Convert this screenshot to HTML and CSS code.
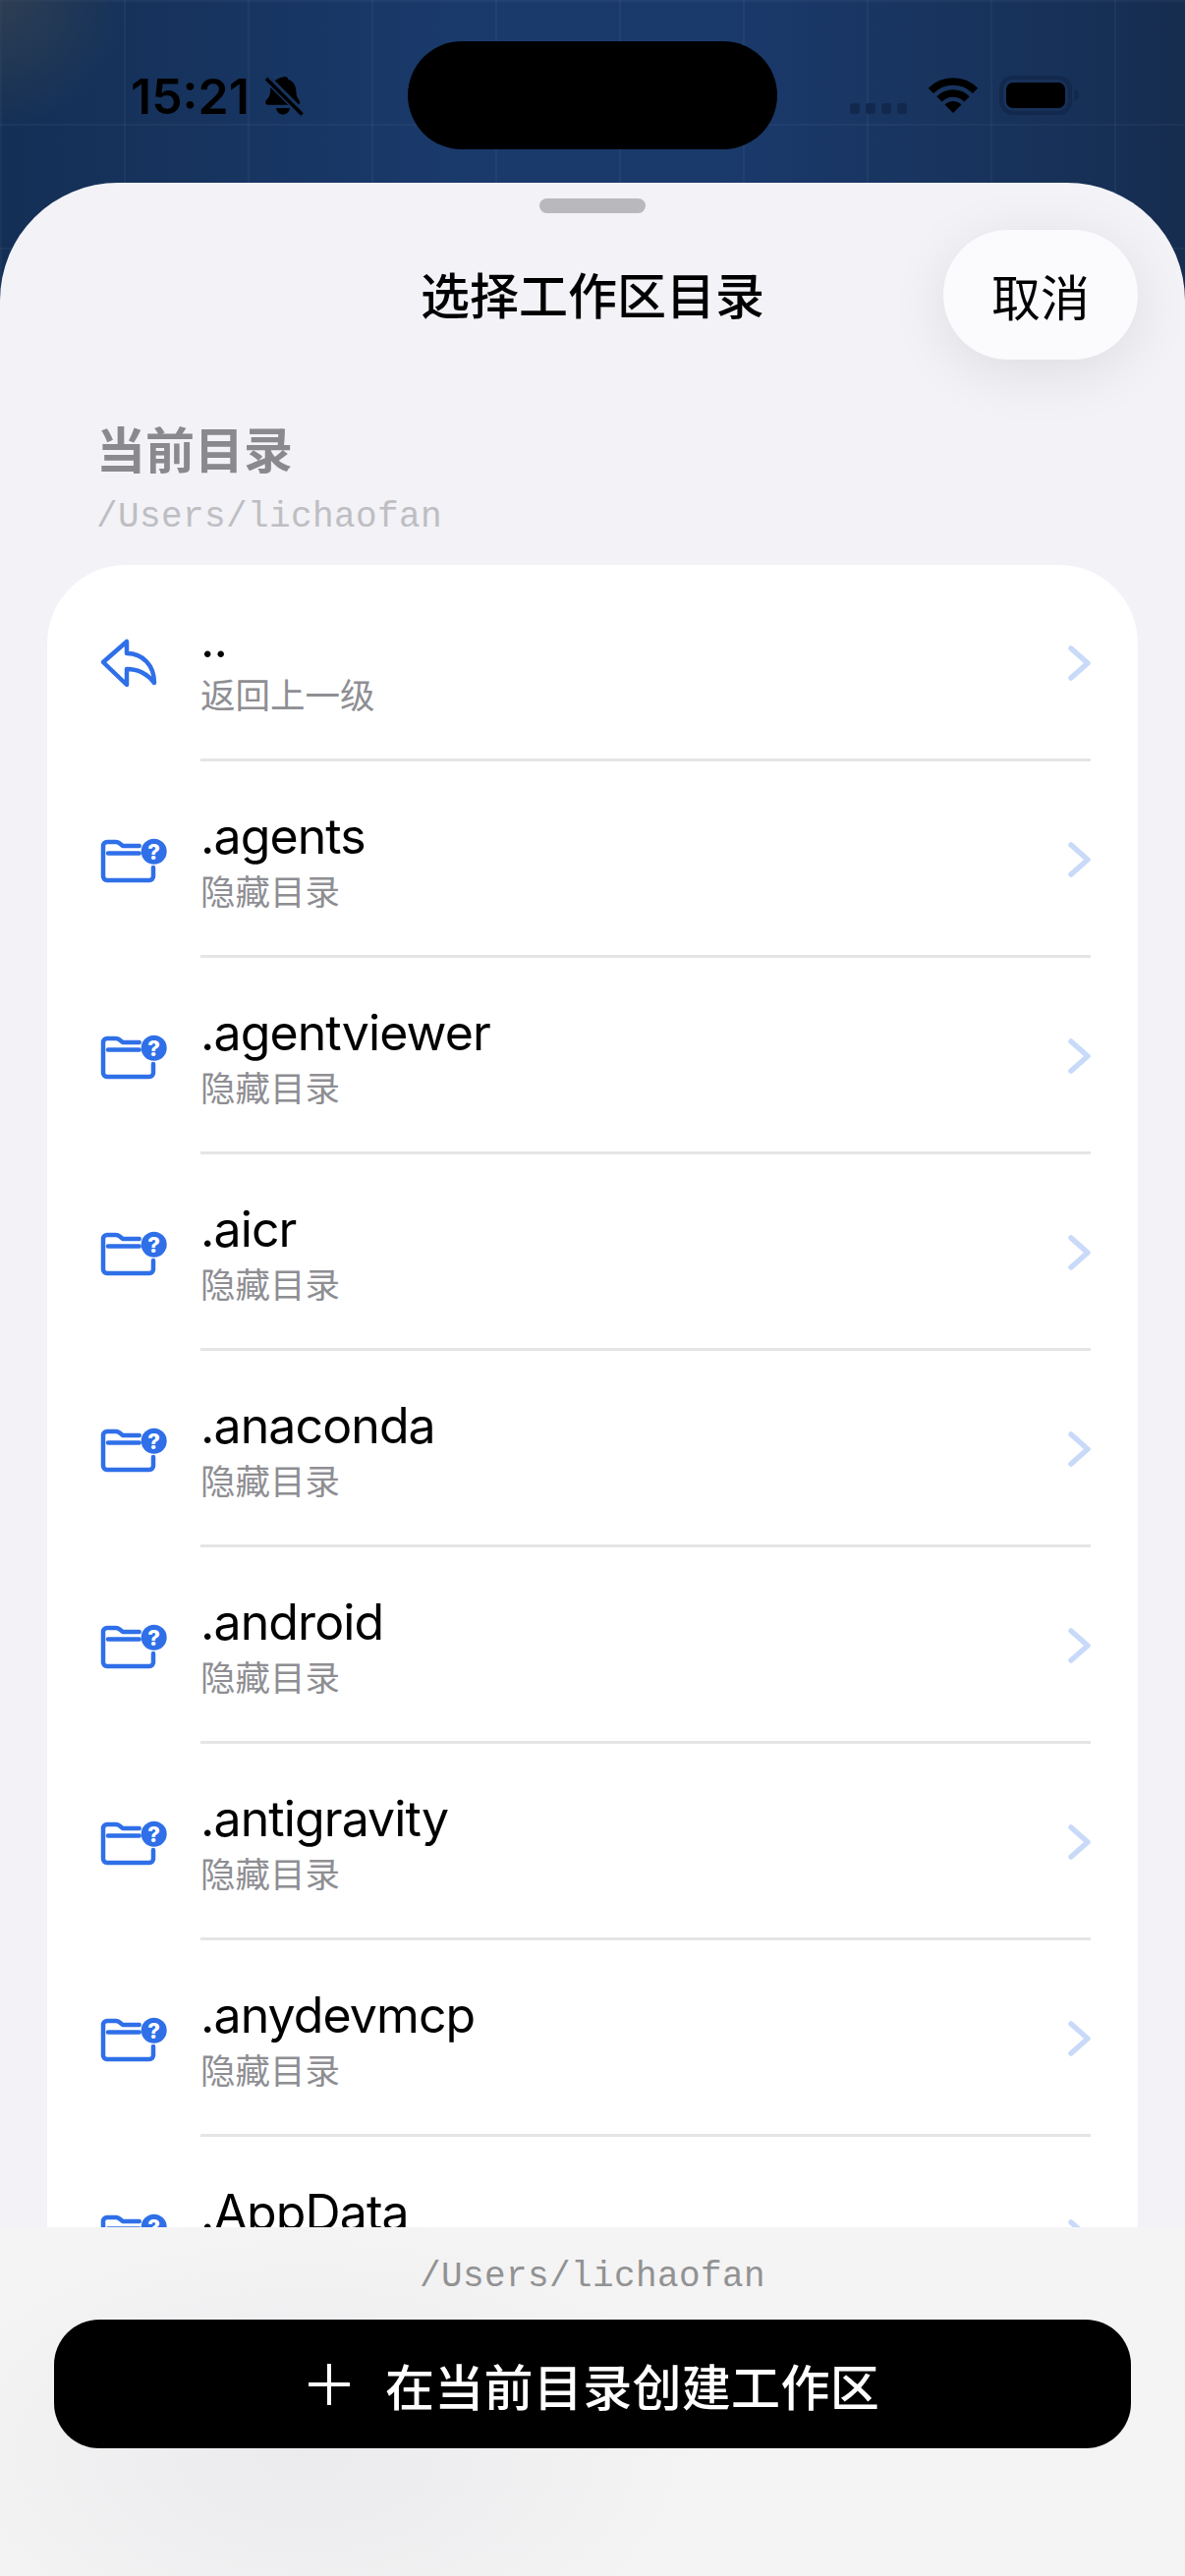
FILE: index.html
```html
<!DOCTYPE html>
<html lang="zh-CN">
  <head>
    <meta charset="UTF-8" />
    <meta name="viewport" content="width=device-width, initial-scale=1.0" />
    <title>选择工作区目录</title>
    <link rel="stylesheet" href="styles.css">
  </head>
  <body>
    <svg class="icon-defs" width="0" height="0">
      <symbol id="folder-hidden" viewBox="0 0 72 60">
        <path class="line" d="M56 38V47a4 4 0 0 1-4 4H9a4 4 0 0 1-4-4V16a4 4 0 0 1 4-4H18q2 0 3.500 1.300L25 16H41.700M10 23.500H41.700" />
        <circle class="badge" cx="56.700" cy="21.700" r="13" />
        <text class="badge-mark" x="56.700" y="29.500" text-anchor="middle">?</text>
      </symbol>
      <symbol id="chevron" viewBox="0 0 26 40">
        <path class="chevron-line" d="M6 5L23 20L6 35" />
      </symbol>
    </svg>

    <header class="status-bar">
      <div class="status-left">
        <span class="clock">15:21</span>
        <svg class="bell" width="40" height="42" viewBox="0 0 40 42">
          <path d="M18 2c1.500-1.500 4-1.500 5.500 0 .5.600.7 1.200.8 1.800 5 1.800 7.700 6 8 11.500.2 4 .6 7 3 9.500 1.400 1.500 1.200 5-1.500 5H4c-3 0-3.700-3-1.800-5 2.500-2.500 3.800-5 4-10 .3-6 3.500-10.200 8-11.500.5-.6 1.500-1.300 3.800-1.800z" />
          <path d="M12 33h14c-.5 4-3.500 6.500-7 6.500s-6.500-2.500-7-6.500z" />
          <path class="bell-gap" d="M0 0L40 40" />
          <path class="bell-slash" d="M2 3L38.500 39.500" />
        </svg>
      </div>
      <div class="island"></div>
      <div class="status-right">
        <div class="signal"><i></i><i></i><i></i><i></i></div>
        <svg class="wifi" width="50" height="38" viewBox="0 0 50 38">
          <path class="wifi-arc" d="M2.400 14.400A32 32 0 0 1 47.600 14.400" />
          <path class="wifi-arc" d="M10.900 22.900A20 20 0 0 1 39.100 22.900" />
          <path d="M25 37L16.500 28.500A12 12 0 0 1 33.500 28.500Z" />
        </svg>
        <svg class="battery" width="83" height="40" viewBox="0 0 83 40">
          <rect class="battery-case" x="2" y="2" width="70" height="36" rx="12" />
          <rect x="7" y="7" width="60" height="26" rx="7" />
          <path class="battery-tip" d="M76 14c3 .5 5 3 5 6s-2 5.500-5 6z" />
        </svg>
      </div>
    </header>

    <main class="sheet">
      <div class="grabber"></div>

      <div class="sheet-header">
        <h1 class="sheet-title">选择工作区目录</h1>
        <button class="cancel-btn">取消</button>
      </div>

      <div class="current-dir">
        <h2 class="current-label">当前目录</h2>
        <p class="current-path">/Users/lichaofan</p>
      </div>

      <div class="list-wrap">
        <ul class="dir-list">
          <li class="dir-row">
            <svg class="dir-icon" width="72" height="60" viewBox="0 0 72 60">
              <path class="line" d="M5 29L29 8V20C45 20 57 32 57 50C50 41 40 36 29 36V52Z" />
            </svg>
            <div class="dir-body">
              <div class="dir-text">
                <span class="dir-name">..</span>
                <span class="dir-sub">返回上一级</span>
              </div>
              <svg class="dir-chevron" width="26" height="40"><use href="#chevron" /></svg>
            </div>
          </li>
          <li class="dir-row">
            <svg class="dir-icon" width="72" height="60"><use href="#folder-hidden" /></svg>
            <div class="dir-body">
              <div class="dir-text">
                <span class="dir-name">.agents</span>
                <span class="dir-sub">隐藏目录</span>
              </div>
              <svg class="dir-chevron" width="26" height="40"><use href="#chevron" /></svg>
            </div>
          </li>
          <li class="dir-row">
            <svg class="dir-icon" width="72" height="60"><use href="#folder-hidden" /></svg>
            <div class="dir-body">
              <div class="dir-text">
                <span class="dir-name">.agentviewer</span>
                <span class="dir-sub">隐藏目录</span>
              </div>
              <svg class="dir-chevron" width="26" height="40"><use href="#chevron" /></svg>
            </div>
          </li>
          <li class="dir-row">
            <svg class="dir-icon" width="72" height="60"><use href="#folder-hidden" /></svg>
            <div class="dir-body">
              <div class="dir-text">
                <span class="dir-name">.aicr</span>
                <span class="dir-sub">隐藏目录</span>
              </div>
              <svg class="dir-chevron" width="26" height="40"><use href="#chevron" /></svg>
            </div>
          </li>
          <li class="dir-row">
            <svg class="dir-icon" width="72" height="60"><use href="#folder-hidden" /></svg>
            <div class="dir-body">
              <div class="dir-text">
                <span class="dir-name">.anaconda</span>
                <span class="dir-sub">隐藏目录</span>
              </div>
              <svg class="dir-chevron" width="26" height="40"><use href="#chevron" /></svg>
            </div>
          </li>
          <li class="dir-row">
            <svg class="dir-icon" width="72" height="60"><use href="#folder-hidden" /></svg>
            <div class="dir-body">
              <div class="dir-text">
                <span class="dir-name">.android</span>
                <span class="dir-sub">隐藏目录</span>
              </div>
              <svg class="dir-chevron" width="26" height="40"><use href="#chevron" /></svg>
            </div>
          </li>
          <li class="dir-row">
            <svg class="dir-icon" width="72" height="60"><use href="#folder-hidden" /></svg>
            <div class="dir-body">
              <div class="dir-text">
                <span class="dir-name">.antigravity</span>
                <span class="dir-sub">隐藏目录</span>
              </div>
              <svg class="dir-chevron" width="26" height="40"><use href="#chevron" /></svg>
            </div>
          </li>
          <li class="dir-row">
            <svg class="dir-icon" width="72" height="60"><use href="#folder-hidden" /></svg>
            <div class="dir-body">
              <div class="dir-text">
                <span class="dir-name">.anydevmcp</span>
                <span class="dir-sub">隐藏目录</span>
              </div>
              <svg class="dir-chevron" width="26" height="40"><use href="#chevron" /></svg>
            </div>
          </li>
          <li class="dir-row">
            <svg class="dir-icon" width="72" height="60"><use href="#folder-hidden" /></svg>
            <div class="dir-body">
              <div class="dir-text">
                <span class="dir-name">.AppData</span>
                <span class="dir-sub">隐藏目录</span>
              </div>
              <svg class="dir-chevron" width="26" height="40"><use href="#chevron" /></svg>
            </div>
          </li>
        </ul>
      </div>

      <footer class="sheet-footer">
        <p class="footer-path">/Users/lichaofan</p>
        <button class="create-btn">
          <svg class="create-plus" width="42" height="42" viewBox="0 0 42 42">
            <path d="M21 1V41M1 21H41" />
          </svg>
          <span>在当前目录创建工作区</span>
        </button>
      </footer>
    </main>
  </body>
</html>
```

FILE: styles.css
```css
* {
  margin: 0;
  padding: 0;
  box-sizing: border-box;
}

body {
  width: 1206px;
  height: 2622px;
  overflow: hidden;
  display: flex;
  flex-direction: column;
  font-family: Inter, "Noto Sans CJK SC", sans-serif;
  color: #000;
  background-color: #1a3a6c;
  background-image:
    radial-gradient(circle at 0 0, rgba(70, 78, 80, 0.5) 0, rgba(70, 78, 80, 0) 130px),
    linear-gradient(90deg, rgba(255, 255, 255, 0.035) 2px, transparent 2px),
    linear-gradient(180deg, rgba(255, 255, 255, 0.035) 2px, transparent 2px),
    linear-gradient(90deg, #142f55 0%, #1a3a6c 40%, #1a3a6c 60%, #162d50 100%);
  background-size: 100% 100%, 126px 126px, 126px 126px, 100% 100%;
  background-position: 0 0, 126px 0, 0 126px, 0 0;
}

.icon-defs {
  display: none;
}

/* status bar */
.status-bar {
  height: 186px;
  flex-shrink: 0;
  display: grid;
  grid-template-columns: 282px 376px 1fr;
  align-items: start;
  padding: 42px 106px 0 133px;
}

.status-left {
  display: flex;
  align-items: center;
  gap: 15px;
  margin-top: 34px;
}

.clock {
  font-size: 50px;
  font-weight: 600;
  line-height: 44px;
}

.bell-gap {
  stroke: #17345f;
  stroke-width: 8;
}

.bell-slash {
  stroke: #000;
  stroke-width: 3.5;
}

.island {
  height: 110px;
  border-radius: 55px;
  background: #000;
}

.status-right {
  display: flex;
  align-items: center;
  justify-content: flex-end;
  gap: 22px;
  margin-top: 35px;
}

.signal {
  display: flex;
  gap: 6px;
  margin-top: 26px;
}

.signal i {
  width: 10px;
  height: 11px;
  border-radius: 3px;
  background: #12294d;
}

.wifi-arc {
  fill: none;
  stroke: #000;
  stroke-width: 7.500;
}

.battery-case {
  fill: none;
  stroke: #12294d;
  stroke-width: 4;
}

.battery-tip {
  fill: #12294d;
}

/* sheet */
.sheet {
  flex: 1;
  min-height: 0;
  display: flex;
  flex-direction: column;
  background: #f2f2f7;
  border-radius: 120px 120px 0 0;
  overflow: hidden;
}

.grabber {
  width: 108px;
  height: 15px;
  margin: 16px auto 0;
  flex-shrink: 0;
  border-radius: 8px;
  background: #b9b9bd;
}

.sheet-header {
  display: grid;
  grid-template-columns: 1fr auto 1fr;
  align-items: center;
  height: 132px;
  margin-top: 17px;
  padding: 0 48px;
  flex-shrink: 0;
}

.sheet-title {
  grid-column: 2;
  padding-top: 3px;
  font-size: 50px;
  font-weight: 500;
  line-height: 60px;
}

.cancel-btn {
  grid-column: 3;
  justify-self: end;
  width: 198px;
  height: 132px;
  border: none;
  border-radius: 66px;
  background: #fbfbfe;
  box-shadow: 0 12px 60px rgba(0, 0, 0, 0.09);
  font-family: inherit;
  font-size: 50px;
  color: #000;
}

.current-dir {
  padding: 60px 0 0 98px;
  height: 209px;
  flex-shrink: 0;
}

.current-label {
  font-size: 50px;
  font-weight: 700;
  line-height: 66px;
  color: #8a8a8e;
}

.current-path {
  margin-top: 15px;
  font-family: "Liberation Mono", monospace;
  font-size: 36px;
  line-height: 40px;
  letter-spacing: 0.4px;
  color: #bebec2;
}

.list-wrap {
  flex: 1;
  min-height: 0;
  padding: 0 48px;
  overflow: hidden;
}

.dir-list {
  list-style: none;
  background: #fff;
  border-radius: 80px 80px 0 0;
}

.dir-row {
  display: flex;
  align-items: center;
  height: 200px;
  padding-left: 52px;
}

.dir-icon {
  flex-shrink: 0;
  margin-right: 32px;
}

.line {
  fill: none;
  stroke: #2f6fe8;
  stroke-width: 4.500;
  stroke-linecap: round;
  stroke-linejoin: round;
}

.badge {
  fill: #2f6fe8;
}

.badge-mark {
  font-family: Inter, sans-serif;
  font-size: 22px;
  font-weight: 800;
  fill: #fff;
}

.dir-body {
  flex: 1;
  height: 100%;
  display: flex;
  align-items: center;
  justify-content: space-between;
  margin-right: 48px;
  border-bottom: 3px solid #e5e5e7;
}

.dir-row:last-child .dir-body {
  border-bottom: none;
}

.dir-text {
  display: flex;
  flex-direction: column;
}

.dir-name {
  font-size: 50px;
  line-height: 60px;
  letter-spacing: -0.9px;
}

.dir-sub {
  margin: 5px 0 -5px;
  font-size: 35.500px;
  line-height: 46px;
  color: #8e8e93;
}

.dir-chevron {
  flex-shrink: 0;
  margin-top: 3px;
}

.chevron-line {
  fill: none;
  stroke: #c9daf9;
  stroke-width: 5.500;
  stroke-linecap: round;
  stroke-linejoin: round;
}

/* footer */
.sheet-footer {
  height: 355px;
  flex-shrink: 0;
  padding: 31px 55px 0;
  background: radial-gradient(ellipse 420px 240px at 310px 230px, #ebebed 0%, rgba(235, 235, 237, 0) 100%), #f4f4f5;
}

.footer-path {
  font-family: "Liberation Mono", monospace;
  font-size: 36px;
  line-height: 40px;
  letter-spacing: 0.4px;
  text-align: center;
  color: #929292;
}

.create-btn {
  width: 1096px;
  height: 131px;
  margin-top: 23px;
  padding-left: 3px;
  display: flex;
  align-items: center;
  justify-content: center;
  gap: 36px;
  border: none;
  border-radius: 46px;
  background: #000;
  color: #fff;
  font-family: inherit;
  font-size: 50px;
  font-weight: 500;
  letter-spacing: 0.3px;
}

.create-plus path {
  fill: none;
  stroke: #fff;
  stroke-width: 4;
  stroke-linecap: round;
}
```
